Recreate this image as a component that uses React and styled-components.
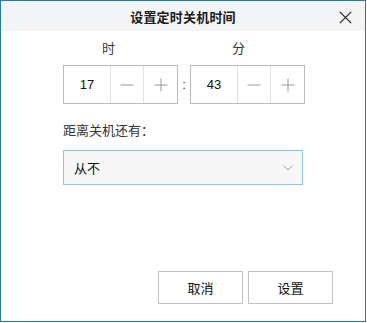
import React, { useState } from 'react';
import styled, { createGlobalStyle } from 'styled-components';

const GlobalStyle = createGlobalStyle`
  html, body {
    margin: 0;
    padding: 0;
    background: #ffffff;
  }
  body {
    font-family: 'Noto Sans CJK SC', 'Noto Sans', sans-serif;
  }
`;

const Window = styled.div`
  box-sizing: border-box;
  width: 366px;
  height: 322px;
  border: 1px solid #1f7ca6;
  background: #ffffff;
  display: flex;
  flex-direction: column;
`;

const TitleBar = styled.div`
  position: relative;
  height: 30px;
  background: #f3f4f6;
  display: flex;
  align-items: center;
  justify-content: center;
  flex-shrink: 0;
`;

const Title = styled.div`
  font-size: 13px;
  font-weight: 700;
  color: #1a1a1a;
  line-height: 1;
  letter-spacing: 0.2px;
`;

const CloseButton = styled.button`
  position: absolute;
  right: 10px;
  top: 6px;
  width: 20px;
  height: 20px;
  padding: 0;
  border: none;
  background: transparent;
  display: flex;
  align-items: center;
  justify-content: center;
  cursor: pointer;
`;

const Body = styled.div`
  flex: 1;
  display: flex;
  flex-direction: column;
  padding: 8px 0 0 62px;
`;

const TimeRow = styled.div`
  display: flex;
  align-items: flex-end;
`;

const TimeColumn = styled.div`
  display: flex;
  flex-direction: column;
  align-items: center;
`;

const ColumnLabel = styled.div`
  width: 100%;
  padding-right: ${p => p.$shift || 0}px;
  box-sizing: border-box;
  text-align: center;
  font-size: 13px;
  line-height: 18px;
  color: #333333;
  margin-bottom: 8px;
`;

const Spin = styled.div`
  display: flex;
  height: 39px;
  border: 1px solid #bcbcbc;
  box-sizing: border-box;
  background: #ffffff;
`;

const SpinValue = styled.div`
  width: 46px;
  display: flex;
  align-items: center;
  justify-content: center;
  font-family: 'Liberation Sans', Arial, sans-serif;
  font-size: 13px;
  color: #111111;
  border-right: 1px solid #e2e2e2;
`;

const SpinButton = styled.button`
  width: ${p => p.$w}px;
  padding: 0;
  border: none;
  border-right: ${p => (p.$last ? 'none' : '1px solid #e2e2e2')};
  background: transparent;
  display: flex;
  align-items: center;
  justify-content: center;
  cursor: pointer;
`;

const Colon = styled.div`
  width: 12px;
  height: 39px;
  display: flex;
  align-items: center;
  justify-content: center;
  font-family: 'Liberation Sans', Arial, sans-serif;
  font-size: 13px;
  color: #333333;
`;

const FieldLabel = styled.div`
  margin-top: 17px;
  font-size: 13px;
  line-height: 18px;
  color: #333333;
`;

const Select = styled.div`
  margin-top: 11px;
  width: 240px;
  height: 35px;
  box-sizing: border-box;
  border: 1px solid #86c8ec;
  background: #f7f7f7;
  display: flex;
  align-items: center;
  justify-content: space-between;
  padding: 0 9px 0 10px;
`;

const SelectText = styled.span`
  font-size: 13px;
  color: #111111;
  line-height: 1;
`;

const Footer = styled.div`
  display: flex;
  justify-content: flex-end;
  gap: 5px;
  padding: 0 32px 17px 0;
  margin-top: auto;
`;

const Button = styled.button`
  width: 85px;
  height: 33px;
  box-sizing: border-box;
  border: 1px solid #c2c2c2;
  background: #ffffff;
  font-family: 'Noto Sans CJK SC', 'Noto Sans', sans-serif;
  font-size: 13px;
  color: #111111;
  padding: 0;
  cursor: pointer;
`;

const Minus = () => (
  <svg width="14" height="14" viewBox="0 0 14 14">
    <path d="M0.5 7h13" stroke="#9a9a9a" strokeWidth="1" />
  </svg>
);

const Plus = () => (
  <svg width="14" height="14" viewBox="0 0 14 14">
    <path d="M0.5 7h13M7 0.5v13" stroke="#9a9a9a" strokeWidth="1" />
  </svg>
);

function SpinBox({ value, onChange, max }) {
  return (
    <Spin>
      <SpinValue>{value}</SpinValue>
      <SpinButton $w={33} onClick={() => onChange((value + max) % (max + 1))}>
        <Minus />
      </SpinButton>
      <SpinButton $w={33} $last onClick={() => onChange((value + 1) % (max + 1))}>
        <Plus />
      </SpinButton>
    </Spin>
  );
}

export default function App() {
  const [hour, setHour] = useState(17);
  const [minute, setMinute] = useState(43);

  return (
    <>
      <GlobalStyle />
      <Window>
        <TitleBar>
          <Title>设置定时关机时间</Title>
          <CloseButton>
            <svg width="13" height="13" viewBox="0 0 13 13">
              <path d="M0.8 0.8l11.4 11.4M12.2 0.8L0.8 12.2" stroke="#222" strokeWidth="1.2" />
            </svg>
          </CloseButton>
        </TitleBar>
        <Body>
          <TimeRow>
            <TimeColumn>
              <ColumnLabel $shift={24}>时</ColumnLabel>
              <SpinBox value={hour} onChange={setHour} max={23} />
            </TimeColumn>
            <Colon>:</Colon>
            <TimeColumn>
              <ColumnLabel $shift={18}>分</ColumnLabel>
              <SpinBox value={minute} onChange={setMinute} max={59} />
            </TimeColumn>
          </TimeRow>
          <FieldLabel>距离关机还有：</FieldLabel>
          <Select>
            <SelectText>从不</SelectText>
            <svg width="10" height="6" viewBox="0 0 10 6">
              <path d="M0.5 0.5l4.5 4.5 4.5-4.5" fill="none" stroke="#a0a0a0" strokeWidth="1" />
            </svg>
          </Select>
        </Body>
        <Footer>
          <Button>取消</Button>
          <Button>设置</Button>
        </Footer>
      </Window>
    </>
  );
}
